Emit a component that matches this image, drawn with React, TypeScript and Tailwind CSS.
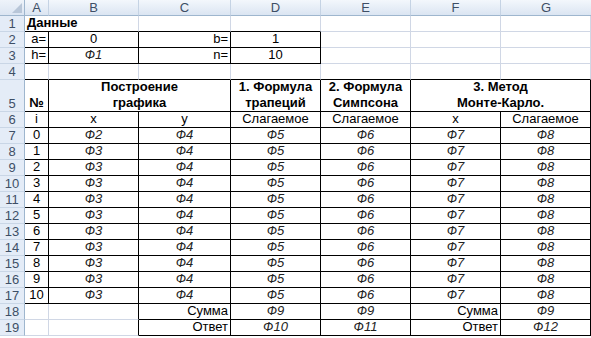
import React from 'react';

type Cell = {
  text?: string;
  span?: number;
  align?: 'left' | 'center' | 'right';
  bold?: boolean;
  italic?: boolean;
  overflow?: boolean;
};

const COLS = ['A', 'B', 'C', 'D', 'E', 'F', 'G'];

const blank = (n: number): Cell[] => Array.from({ length: n }, () => ({}));
const f = (t: string): Cell => ({ text: t, italic: true, align: 'center' });
const c = (t: string): Cell => ({ text: t, align: 'center' });
const r = (t: string): Cell => ({ text: t, align: 'right' });

const dataRows: Cell[][] = [
  [{ text: 'Данные', bold: true, span: 2, align: 'left', overflow: true }, ...blank(5)],
  [r('a='), c('0'), r('b='), c('1'), ...blank(3)],
  [r('h='), f('Ф1'), r('n='), c('10'), ...blank(3)],
  blank(7),
  [
    { text: '№', bold: true, align: 'center' },
    { text: 'Построение\nграфика', bold: true, align: 'center', span: 2 },
    { text: '1. Формула\nтрапеций', bold: true, align: 'center' },
    { text: '2. Формула\nСимпсона', bold: true, align: 'center' },
    { text: '3. Метод\nМонте-Карло.', bold: true, align: 'center', span: 2 },
  ],
  [c('i'), c('x'), c('y'), c('Слагаемое'), c('Слагаемое'), c('x'), c('Слагаемое')],
  ...Array.from({ length: 11 }, (_, i) => [
    c(String(i)),
    f(i === 0 ? 'Ф2' : 'Ф3'),
    f('Ф4'),
    f('Ф5'),
    f('Ф6'),
    f('Ф7'),
    f('Ф8'),
  ]),
  [{}, {}, r('Сумма'), f('Ф9'), f('Ф9'), r('Сумма'), f('Ф9')],
  [{}, {}, r('Ответ'), f('Ф10'), f('Ф11'), r('Ответ'), f('Ф12')],
];

// which cells have the thin black border (row is 1-based, col 0-based)
const bordered = (row: number, col: number) => {
  if (col < 0 || col > 6) return false;
  if (row >= 2 && row <= 3) return col <= 3;
  if (row >= 5 && row <= 17) return true;
  if (row >= 18 && row <= 19) return col >= 2;
  return false;
};

const alignCls = {
  left: 'justify-start text-left',
  center: 'justify-center text-center',
  right: 'justify-end text-right',
};

export default function App() {
  const cells: React.ReactNode[] = [];

  // corner + column headers
  cells.push(
    <div
      key="corner"
      className="relative bg-gradient-to-b from-[#eef3fa] to-[#dbe5f2] border-r border-b border-[#9eb6ce]"
    >
      <svg className="absolute right-[2px] bottom-[2px]" width="10" height="10" viewBox="0 0 10 10">
        <polygon points="10,0 10,10 0,10" fill="#b8c6d8" />
      </svg>
    </div>
  );
  COLS.forEach((col, i) => {
    cells.push(
      <div
        key={'h' + col}
        className={`flex items-center justify-center bg-gradient-to-b from-[#f3f7fc] to-[#dbe5f2] border-b border-[#9eb6ce] text-[13px] text-[#3e4f66] ${
          i < 6 ? 'border-r border-r-[#c5d3e4]' : ''
        }`}
      >
        {col}
      </div>
    );
  });

  dataRows.forEach((row, ri) => {
    const rowNum = ri + 1;
    cells.push(
      <div
        key={'rh' + rowNum}
        className="flex items-end justify-center bg-[#e4ecf7] border-r border-r-[#9eb6ce] border-b border-b-[#c9d6e6] text-[13px] leading-[15px] text-[#3e4f66]"
      >
        {rowNum}
      </div>
    );
    let col = 0;
    row.forEach((cell, ci) => {
      const span = cell.span ?? 1;
      const rightBlack = bordered(rowNum, col) || bordered(rowNum, col + span);
      const bottomBlack = bordered(rowNum, col) || bordered(rowNum + 1, col);
      const cls = [
        'flex items-end overflow-visible whitespace-pre-line px-[2px] text-[13px] leading-[16px] border-r border-b',
        rightBlack ? 'border-r-black' : 'border-r-[#d0d7e5]',
        bottomBlack ? 'border-b-black' : 'border-b-[#d0d7e5]',
        alignCls[cell.align ?? 'left'],
        cell.bold ? 'font-bold' : '',
        cell.italic ? 'italic text-[#222]' : 'text-black',
        span === 2 ? 'col-span-2' : '',
      ].join(' ');
      cells.push(
        <div key={`c${rowNum}-${ci}`} className={cls}>
          {cell.text}
        </div>
      );
      col += span;
    });
  });

  return (
    <div className="w-[591px] h-[338px] overflow-hidden bg-white font-['Liberation_Sans',Arial,sans-serif]">
      <div className="grid grid-cols-[25px_24px_90px_92px_90px_90px_90px_90px] grid-rows-[16px_16px_16px_16px_16px_32px_repeat(14,16px)]">
        {cells}
      </div>
    </div>
  );
}
